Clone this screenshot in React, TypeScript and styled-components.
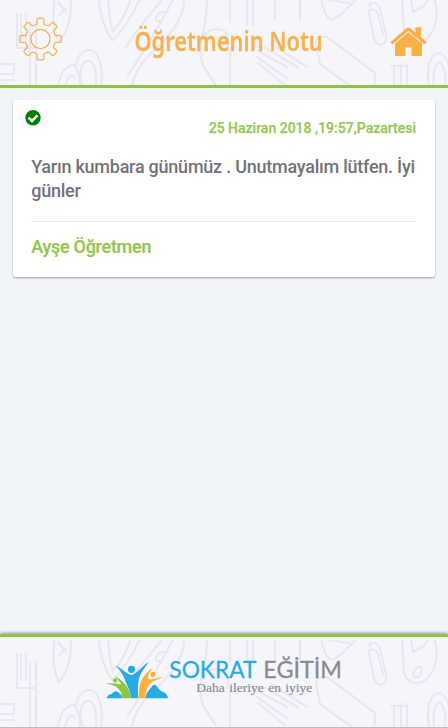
import React from "react";
import styled, { createGlobalStyle } from "styled-components";

const Global = createGlobalStyle`
  * { box-sizing: border-box; }
  html, body, #root { margin: 0; height: 100%; }
  body { background: #f1f5fa; font-family: Roboto, sans-serif; overflow: hidden; }
`;

const Screen = styled.div`
  height: 728px;
  display: flex;
  flex-direction: column;
  background: #f1f5fa;
`;

const Header = styled.header`
  position: relative;
  height: 88px;
  flex: none;
  display: flex;
  align-items: flex-start;
  justify-content: space-between;
  padding: 17px 21px 0 18px;
  border-bottom: 3px solid #8bc34a;
  background: #f5f6fc;
  overflow: hidden;
`;

const Footer = styled.footer`
  position: relative;
  height: 94px;
  flex: none;
  display: flex;
  padding: 19px 0 0 104px;
  border-top: 3px solid #8bc34a;
  border-bottom: 1px solid #bdbdc0;
  background: #f5f6fc;
  box-shadow: 0 -1px 3px rgba(0, 0, 0, 0.4);
`;

const Backdrop = styled.svg<{ $top: number }>`
  position: absolute;
  left: 0;
  top: ${(p) => p.$top}px;
  width: 448px;
  height: 87px;
  pointer-events: none;
  filter: blur(0.7px);
`;

const IconButton = styled.button<{ $drop?: number }>`
  position: relative;
  display: flex;
  margin: ${(p) => p.$drop ?? 0}px 0 0;
  padding: 0;
  border: 0;
  background: none;
  color: #f9b046;
`;

const Title = styled.h1`
  position: relative;
  width: 188px;
  margin: 4px 0 0 4px;
  display: flex;
  justify-content: center;
  font: 600 27px/40px "Noto Sans", sans-serif;
  white-space: nowrap;
  color: #f9b24e;
  -webkit-text-stroke: 0.3px #f9b24e;

  span { transform: scaleX(0.808); }
`;

const Main = styled.main`
  flex: 1;
  padding: 12px 13px;
`;

const Card = styled.article`
  position: relative;
  height: 177px;
  padding: 18px 19px 0 18px;
  border-radius: 3px;
  background: #fff;
  box-shadow: 0 1px 2px rgba(0, 0, 0, 0.35);
`;

const Status = styled.span`
  position: absolute;
  left: 12px;
  top: 10px;
  display: flex;
`;

const DateLine = styled.div`
  text-align: right;
  font-size: 14px;
  line-height: 20px;
  font-weight: 500;
  color: #97c755;
  -webkit-text-stroke: 0.25px #97c755;
`;

const Message = styled.p`
  margin: 17px -4px 0 0.2px;
  padding-bottom: 18px;
  font-size: 18px;
  line-height: 24px;
  font-weight: 500;
  letter-spacing: -0.24px;
  color: #737377;
`;

const Author = styled.div`
  padding: 13px 0 0 0.2px;
  border-top: 1px solid #e9e9e9;
  font-size: 18px;
  line-height: 24px;
  font-weight: 500;
  letter-spacing: -0.27px;
  color: #93c54e;
  -webkit-text-stroke: 0.2px #93c54e;
`;

const LogoSvg = styled.svg`
  position: relative;
  width: 240px;
  height: 46px;
  overflow: visible;
`;

const Doodles = ({ top }: { top: number }) => (
  <Backdrop $top={top} viewBox="0 0 448 87" fill="none" stroke="#e8e9f0" strokeWidth="2.2" strokeLinecap="round" aria-hidden>
    <path d="M0 64H14V74H0M0 80H14M17 14V48M21 14V40M26 14V40M17 48H35M30 22V86M36 22V86" />
    <path d="M55 -4C52 15 53 30 59 42C68 32 73 13 70 -4M58 2L66 12M59 16L66 8" />
    <path d="M58 87C60 72 67 65 74 65C78 70 80 78 80 87M65 87C67 77 72 72 75 78M76 66C77 55 84 49 91 50C99 52 104 68 101 87M83 87C77 70 82 60 90 61C95 65 97 75 96 87" />
    <path d="M98 -3C101 17 105 32 113 40C120 33 132 17 141 -3M108 -3C109 13 110 24 113 31C120 24 127 12 131 -3" />
    <path d="M163 -2C150 15 139 27 125 48M174 -2C160 24 146 49 128 75M184 -2C185 15 175 30 160 45C145 58 135 69 132 87M165 12C158 10 150 23 162 21" />
    <path d="M207 -2C207 18 204 31 200 45M230 -2V22M247 -2V25M253 -2V25M275 -2V19M300 -2V20" />
    <path d="M216 29C200 30 197 50 204 67L215 84M216 29C229 29 229 39 227 48M230 48V87M258 51L287 67M257 57L288 79M258 63L286 86M253 46L266 48L299 68M271 44L307 67" />
    <path d="M321 -2C323 10 326 18 332 20C342 16 349 6 358 -2M323 -1L349 3" />
    <path d="M316 43C317 36 324 35 330 39L374 72C377 77 375 82 374 87M316 43L320 64L352 87" />
    <path d="M370 7C367 2 377 1 380 8L386 34C389 43 379 50 374 39L369 13C368 8 376 8 378 14L383 34" />
    <path d="M402 -3L404 33C408 46 423 46 430 35C437 25 438 11 434 -3M411 0L413 12L424 6L429 -2M413 34C414 27 425 22 421 34C419 38 414 39 413 34" />
    <path d="M394 66V87M401 64V87M407 64V87M391 66H408M429 87C426 67 430 54 439 53C449 56 451 71 449 87M434 87C432 70 436 61 441 63C446 70 446 78 445 87" />
  </Backdrop>
);

const Gear = () => {
  const teeth = Array.from({ length: 8 }, (_, i) => {
    const at = (r: number, deg: number) => {
      const a = ((i * 45 + deg - 90) * Math.PI) / 180;
      return `${(22.5 + r * Math.cos(a)).toFixed(2)} ${(22 + r * Math.sin(a)).toFixed(2)}`;
    };
    return `${i ? "L" : "M"}${at(15, -15)}L${at(16, -12)}L${at(20, -10)}Q${at(21, -9)} ${at(20.9, -6)}L${at(20.9, 6)}Q${at(21, 9)} ${at(20, 10)}L${at(16, 12)}L${at(15, 15)}A15 15 0 0 1 ${at(15, 30)}`;
  }).join("");
  return (
    <svg width="45" height="44" viewBox="0 0 45 44" fill="none" stroke="#f9b046" strokeWidth="1.2" strokeLinejoin="round">
      <path d={teeth + "Z"} />
      <circle cx="22.5" cy="22" r="9.6" />
    </svg>
  );
};

const Home = () => (
  <svg width="37" height="30" viewBox="0 0 37 30" fill="currentColor">
    <path d="M5 16.5L18.5 5.2L32 16.5V28Q32 29 31 29H21.5V20.5H15.5V29H6Q5 29 5 28Z" />
    <path d="M.7 14.8L16.4 1.2Q18.5-.3 20.6 1.2L25.5 5.4V1.1Q25.5.4 26.2.4H30.4Q31.1.4 31.1 1.1V10.2L36.3 14.8Q36.8 15.3 36.3 15.8L35.1 17.1Q34.6 17.6 34 17.1L18.5 3.9L3 17.1Q2.4 17.6 1.9 17.1L.7 15.8Q.2 15.3.7 14.8Z" />
  </svg>
);

const Check = () => (
  <svg width="16" height="16" viewBox="0 0 16 16">
    <circle cx="8" cy="7.8" r="7.7" fill="#008000" />
    <path d="M3.6 7.6L7 10.9L12.5 5.4" fill="none" stroke="#fff" strokeWidth="2.7" />
  </svg>
);

const Logo = () => (
  <LogoSvg viewBox="312 60 720 138" aria-label="Sokrat Eğitim">
    <g fill="#29abe2">
      <path d="M319 187Q324 175 335 174Q343 161 353 168L378 187Z" />
      <path d="M433 187Q441 166 457 150Q463 142 470 150Q478 164 489 167Q503 174 504 187Z" />
      <circle cx="394.500" cy="100" r="11" />
      <path d="M346 89C364 94 376 112 394 117C411 113 425 91 447 77C430 101 417 116 415 139Q413 160 414 187H391Q390 161 378 140C372 119 360 101 346 89Z" />
    </g>
    <g fill="#8cc63f" stroke="#f4f6fc" strokeWidth="2" paintOrder="stroke">
      <path d="M319 143C342 139 360 146 365 145C359 136 349 128 342 119C360 128 369 137 378 148Q391 164 392 187H368Q365 164 349 152Q337 145 319 143Z" />
      <circle cx="345" cy="133" r="6.500" />
    </g>
    <g fill="#fbb03b" stroke="#f4f6fc" strokeWidth="2" paintOrder="stroke">
      <path d="M414 187C419 166 416 146 427 128Q437 111 460 94C450 107 443 118 445 128C456 133 469 124 491 122C469 130 451 139 444 151Q437 164 436 187Z" />
      <circle cx="459" cy="115" r="8" />
    </g>
    <text x="508" y="127" fontFamily="Lato, sans-serif" fontSize="67" textLength="261" lengthAdjust="spacingAndGlyphs" fill="#29abe2" stroke="#29abe2" strokeWidth=".8">SOKRAT</text>
    <text x="790" y="127" fontFamily="Lato, sans-serif" fontSize="67" textLength="236" lengthAdjust="spacingAndGlyphs" fill="#8b8b8b" stroke="#8b8b8b" strokeWidth=".8">EĞİTİM</text>
    <text x="589" y="167" fontFamily="'Liberation Serif', serif" fontSize="40" wordSpacing="3" textLength="348" lengthAdjust="spacingAndGlyphs" fill="#8c8c8c" stroke="#8c8c8c" strokeWidth=".5">Daha ileriye en iyiye</text>
  </LogoSvg>
);

export default function App() {
  return (
    <>
      <Global />
      <Screen>
        <Header>
          <Doodles top={0} />
          <IconButton aria-label="Ayarlar"><Gear /></IconButton>
          <Title><span>Öğretmenin Notu</span></Title>
          <IconButton $drop={10} aria-label="Ana sayfa"><Home /></IconButton>
        </Header>
        <Main>
          <Card>
            <Status><Check /></Status>
            <DateLine>25 Haziran 2018 ,19:57,Pazartesi</DateLine>
            <Message>Yarın kumbara günümüz . Unutmayalım lütfen. İyi günler</Message>
            <Author>Ayşe Öğretmen</Author>
          </Card>
        </Main>
        <Footer>
          <Doodles top={3} />
          <Logo />
        </Footer>
      </Screen>
    </>
  );
}
